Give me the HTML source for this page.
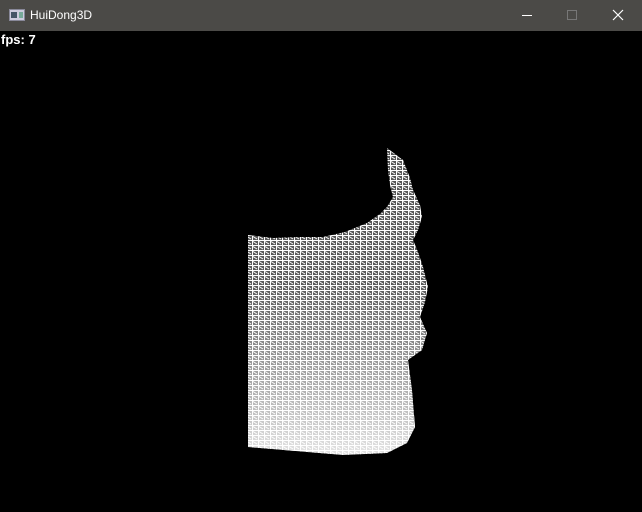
<!DOCTYPE html>
<html><head><style>
body{margin:0;width:642px;height:512px;background:#000;overflow:hidden;font-family:"Liberation Sans",sans-serif;position:relative}
.tb{position:absolute;left:0;top:0;width:642px;height:31px;background:#4b4a47}
.tt{position:absolute;left:30px;top:8px;color:#fff;font-size:12px}
.fps{position:absolute;left:1px;top:32px;color:#fff;font-size:13px;font-weight:bold}
</style></head><body>
<div class="tb">
<svg width="16" height="12" style="position:absolute;left:9px;top:9px"><rect x="0.5" y="0.5" width="15" height="11" fill="#ccd" stroke="#889"/><rect x="2" y="3" width="6" height="6" fill="#456"/><rect x="10" y="3" width="4" height="6" fill="#7a9"/></svg>
<div class="tt">HuiDong3D</div>
<svg width="142" height="31" style="position:absolute;left:500px;top:0">
<line x1="22" y1="15.5" x2="32" y2="15.5" stroke="#fff"/>
<rect x="67.5" y="10.5" width="9" height="9" fill="none" stroke="#777"/>
<path d="M113 10L123 20M123 10L113 20" stroke="#fff" stroke-width="1.2"/>
</svg>
</div>
<div class="fps">fps: 7</div>
<svg width="642" height="512" style="position:absolute;left:0;top:0">
<defs>
<linearGradient id="g" x1="0" y1="0" x2="0" y2="1">
<stop offset="0" stop-color="#555"/><stop offset="0.45" stop-color="#5a5a5a"/><stop offset="1" stop-color="#e8e8e8"/>
</linearGradient>
<pattern id="p" width="6" height="5" patternUnits="userSpaceOnUse">
<path d="M0 0.5H6M0.5 0V5M1 1.5L5 4" stroke="#fff" stroke-width="1"/>
</pattern>
<clipPath id="c"><polygon points="387,148 403,160 410,178 413,190 420,205 422,217 418,230 413,240 418,252 423,267 428,287 425,302 420,317 427,333 422,350 408,360 410,375 412,390 415,427 407,443 387,453 343,455 248,447 248,235 273,238 300,237 323,237 345,232 367,223 380,214 387,207 393,197 390,185 388,170"/></clipPath>
</defs>
<g clip-path="url(#c)">
<rect x="240" y="140" width="200" height="320" fill="url(#g)"/>
<rect x="240" y="140" width="200" height="320" fill="url(#p)"/>
</g>
</svg>
</body></html>
